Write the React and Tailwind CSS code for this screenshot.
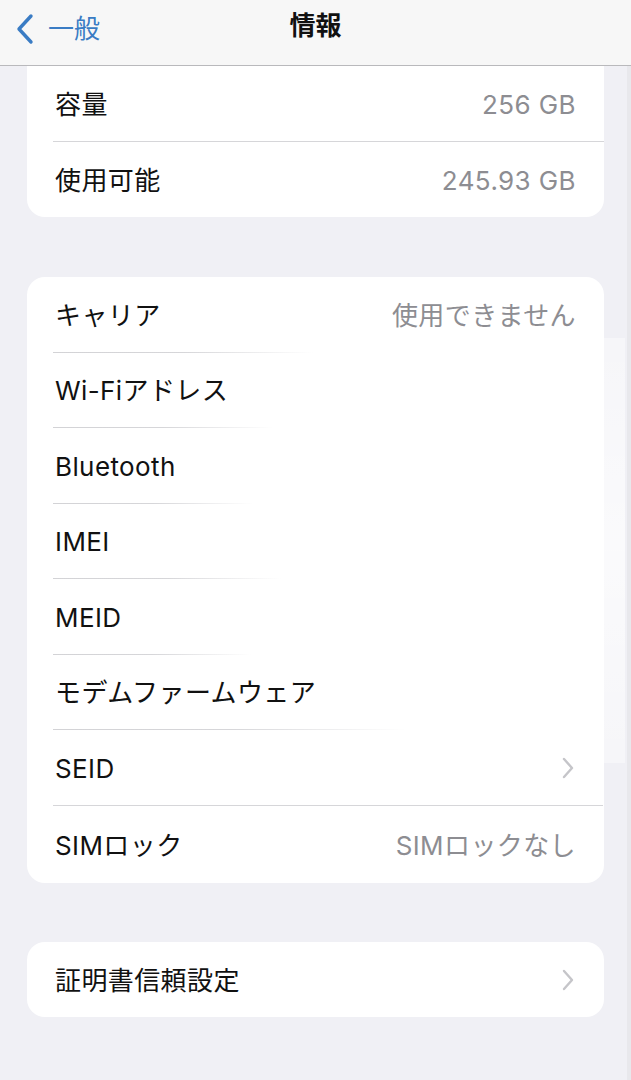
const FONT = { fontFamily: 'Inter, "Noto Sans CJK JP", sans-serif' };

const NETWORK_ROWS = [
  { label: 'キャリア', value: '使用できません', sep: 'w-[260px]' },
  { label: 'Wi-Fiアドレス', sep: 'w-[220px]' },
  { label: 'Bluetooth', sep: 'w-[200px]' },
  { label: 'IMEI', sep: 'w-[228px]' },
  { label: 'MEID', sep: 'w-[198px]' },
  { label: 'モデムファームウェア', sep: 'w-[352px]' },
  { label: 'SEID', chevron: true, sep: 'w-[550px]', solid: true },
  { label: 'SIMロック', value: 'SIMロックなし' },
];

function Chevron() {
  return (
    <svg width="14" height="22" viewBox="0 0 14 22" className="mr-[1px]">
      <path d="M3 2 L11 11 L3 20" fill="none" stroke="#c5c5c9" strokeWidth="2.4" strokeLinecap="round" strokeLinejoin="round" />
    </svg>
  );
}

function Row({ label, value, chevron, h = 'h-[75px]' }) {
  return (
    <div className={`flex items-center justify-between ${h} pl-7 pr-7 pt-[2px]`}>
      <span className="text-[26px] text-[#111] tracking-[0.4px]">{label}</span>
      {value && <span className="text-[26px] text-[#8d8d92] tracking-[0.4px]">{value}</span>}
      {chevron && <Chevron />}
    </div>
  );
}

function Separator({ w, solid }) {
  return (
    <div className="pl-[26px]">
      <div
        className={`h-px ${w} ${solid ? 'bg-[#d6d6d9]' : 'bg-gradient-to-r from-[#d3d3d6] via-[#d6d6d9] to-transparent'}`}
      />
    </div>
  );
}

export default function App() {
  return (
    <div className="relative w-[631px] h-[1080px] bg-[#f0f0f5] overflow-hidden" style={FONT}>
      <div className="relative h-[66px] bg-[#f7f7f7] border-b border-[#b9b9bc]">
        <div className="absolute left-[14px] top-[13px] flex items-center text-[#3a7cc4]">
          <svg width="22" height="32" viewBox="0 0 22 32">
            <path d="M17 3 L5 16 L17 29" fill="none" stroke="#3a7cc4" strokeWidth="3.4" strokeLinecap="round" strokeLinejoin="round" />
          </svg>
          <span className="ml-[12px] text-[26px] leading-none">一般</span>
        </div>
        <span className="absolute left-0 right-0 top-[13px] text-center text-[26px] leading-none font-bold text-[#111]">情報</span>
      </div>

      <div className="px-[27px]">
        <div className="bg-white rounded-b-[18px]">
          <Row label="容量" value="256 GB" />
          <div className="pl-[26px]"><div className="h-px bg-[#d6d6d9]" /></div>
          <Row label="使用可能" value="245.93 GB" />
        </div>

        <div className="mt-[60px] bg-white rounded-[18px]">
          {NETWORK_ROWS.map((r, i) => (
            <div key={r.label}>
              <Row {...r} h={i === NETWORK_ROWS.length - 1 ? 'h-[77px]' : 'h-[74.5px]'} />
              {i < NETWORK_ROWS.length - 1 && <Separator w={r.sep} solid={r.solid} />}
            </div>
          ))}
        </div>

        <div className="mt-[59px] bg-white rounded-[18px]">
          <Row label="証明書信頼設定" chevron />
        </div>
      </div>

      {/* white patch left over from editing the screenshot */}
      <div className="absolute left-[603px] top-[338px] w-[22px] h-[425px] bg-gradient-to-b from-white/40 via-white/70 to-white/40" />
      <div className="absolute right-0 top-[66px] w-[4px] h-[1014px] bg-[#e8e8ec]" />
    </div>
  );
}
